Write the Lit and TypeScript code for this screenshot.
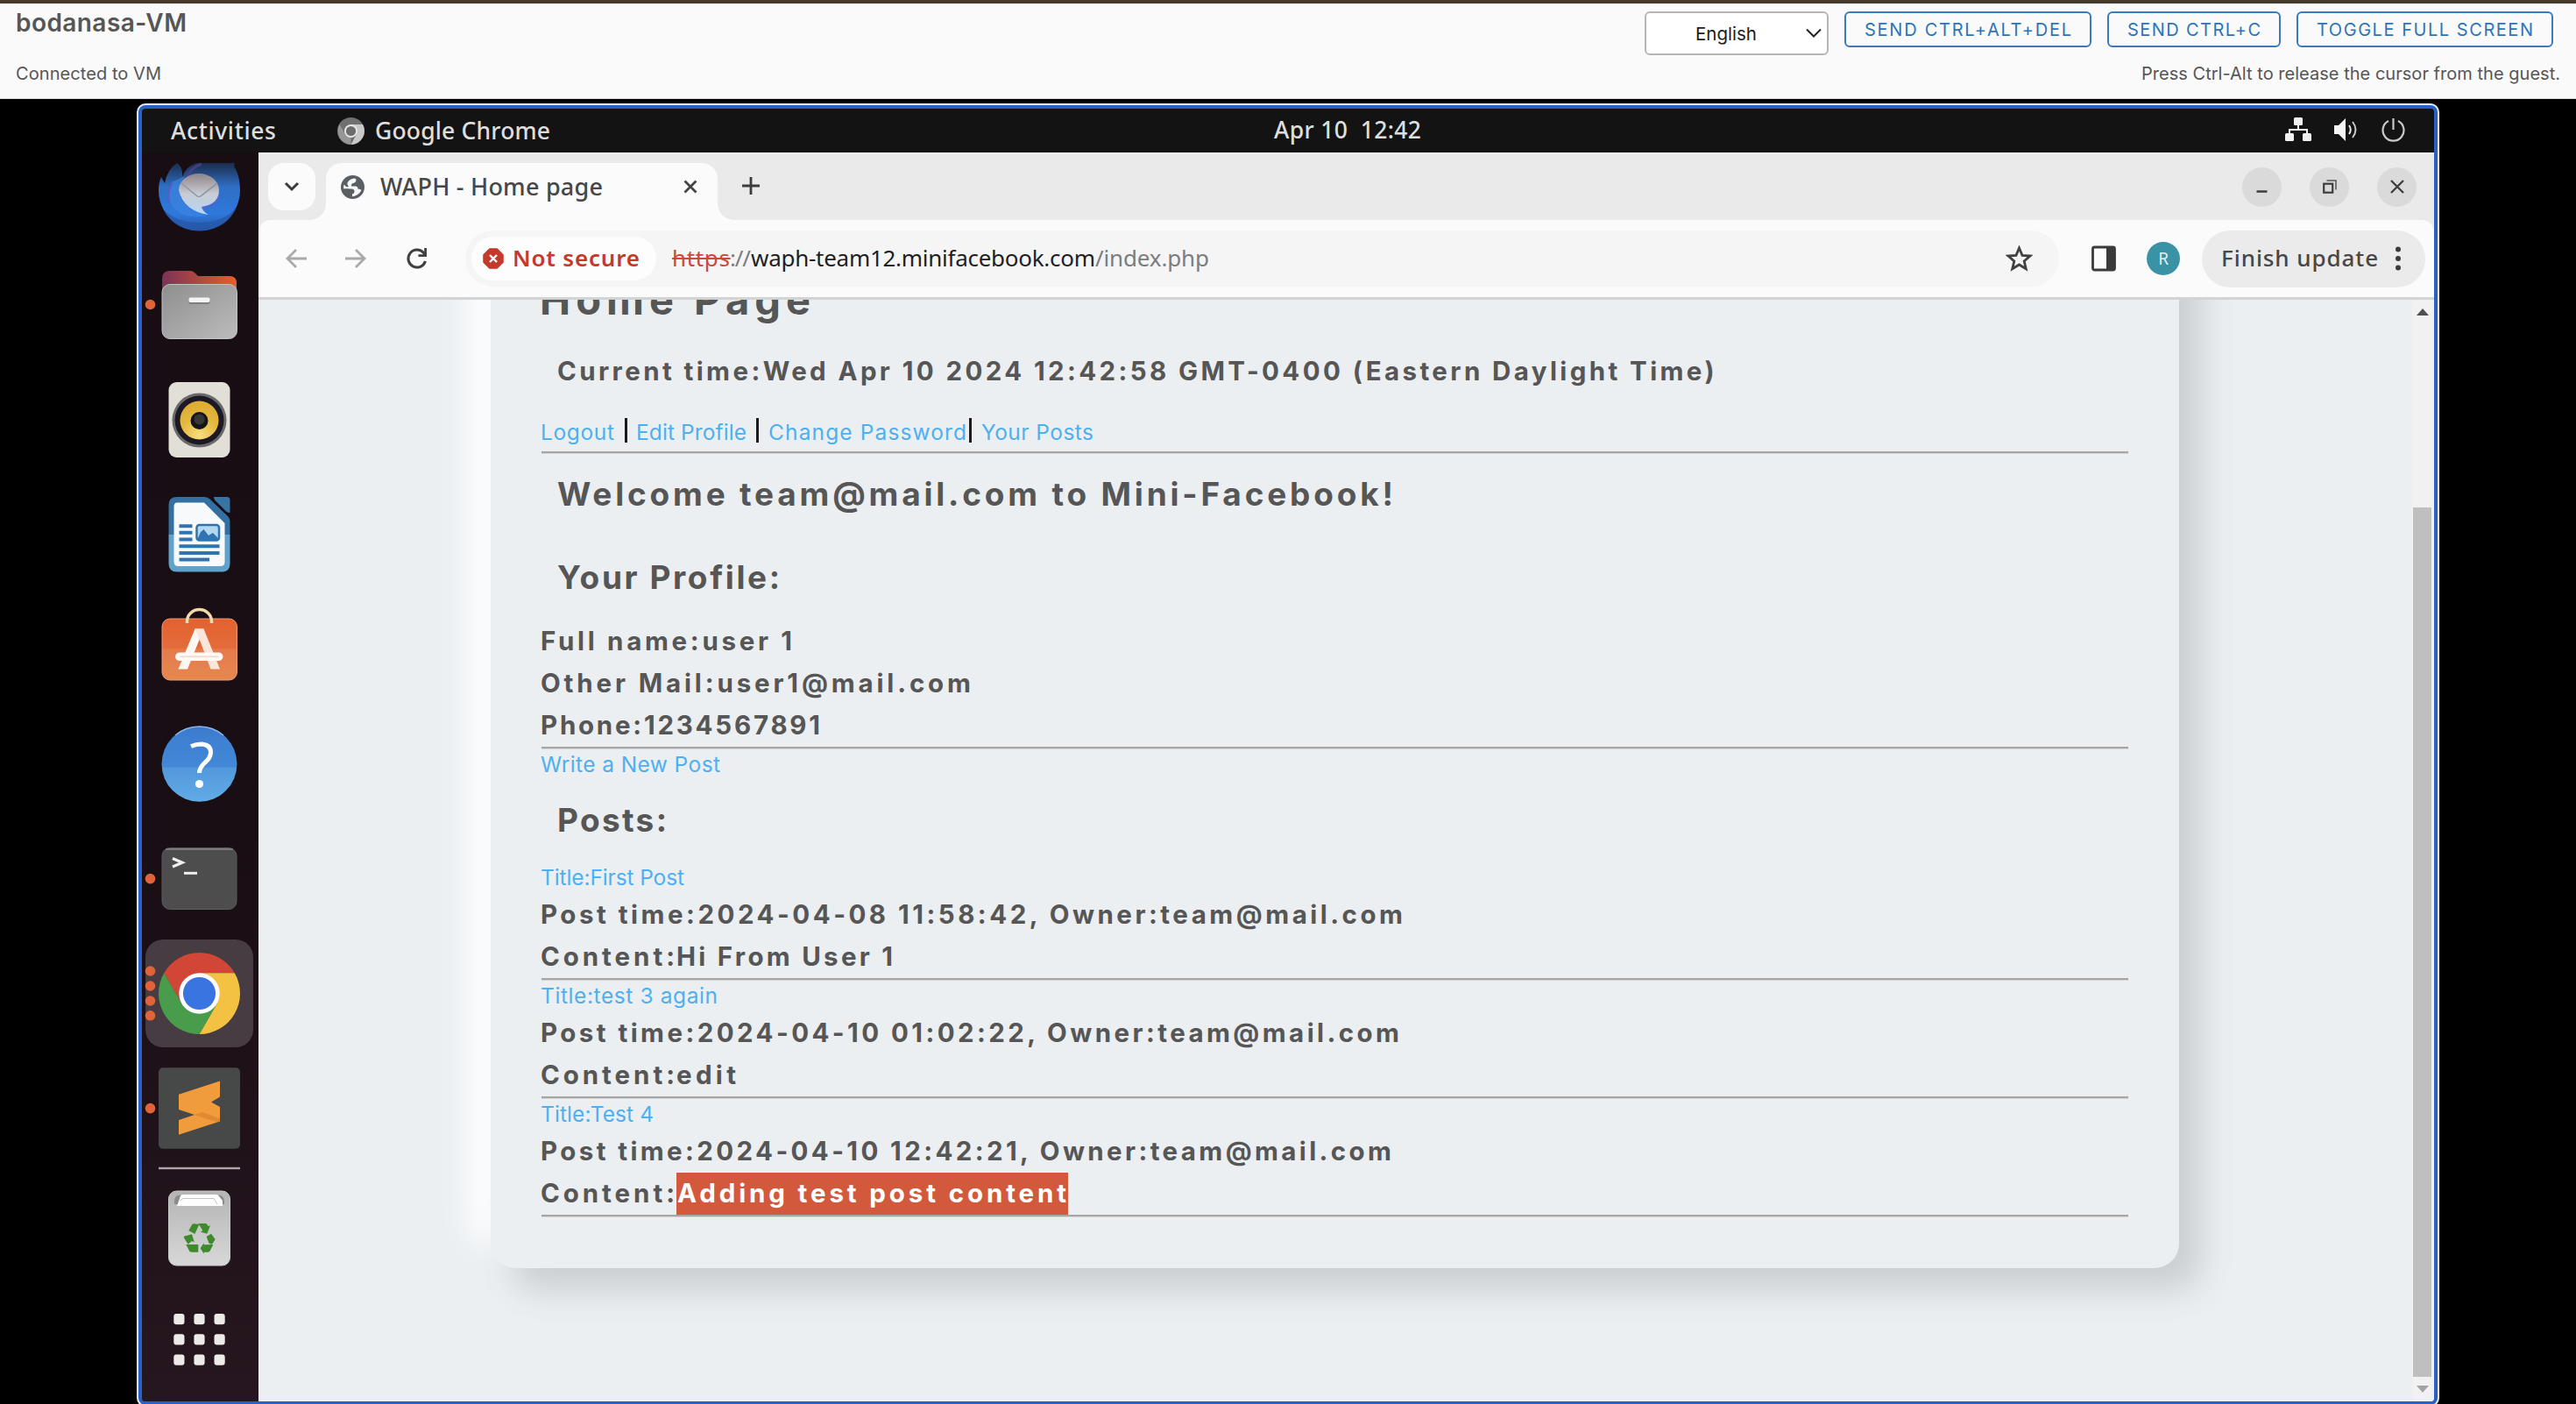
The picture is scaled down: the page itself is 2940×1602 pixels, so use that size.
import { LitElement, html, svg, css } from "lit";
import { customElement, property, query } from "lit/decorators.js";

/** One line of text whose tracking is adjusted so that it spans a given width. */
@customElement("tracked-text")
class TrackedText extends LitElement {
  static styles = css`
    :host { display: block; flex: none; white-space: pre; }
    .t { display: inline-block; text-decoration: inherit; }
  `;
  @property() text = "";
  @property({ type: Number }) span = 100;
  @query(".t") line!: HTMLElement;

  render() {
    return html`<span class="t">${this.text}</span>`;
  }
  updated() {
    this.style.width = `${this.span}px`;
    this.line.style.letterSpacing = "normal";
    const natural = this.line.getBoundingClientRect().width;
    const gaps = Math.max(1, this.text.length - 1);
    this.line.style.letterSpacing = `${(this.span - natural) / gaps}px`;
  }
}

const tt = (text: string, span: number, cls = "") =>
  html`<tracked-text class=${cls} .text=${text} .span=${span}></tracked-text>`;

const dot = (y: number) => svg`<circle cx="171.5" cy=${y} r="5.8" fill="#e0643a"/>`;

const dockItems = [
  {
    top: 174, h: 108,
    art: svg`
      <defs>
        <linearGradient id="tb" x1="0" y1="0" x2="0" y2="1"><stop offset="0" stop-color="#1b2c4c"/><stop offset=".35" stop-color="#2f6fc4"/><stop offset=".75" stop-color="#2f78dc"/><stop offset="1" stop-color="#2858a8"/></linearGradient>
        <linearGradient id="te" x1="0" y1="0" x2="0" y2="1"><stop offset="0" stop-color="#8e8488"/><stop offset=".5" stop-color="#c9ccd4"/><stop offset="1" stop-color="#b5d6f5"/></linearGradient>
      </defs>
      <path d="M184 202 L188 209 Q191 193 202 186 Q209 190 208 202 Q212 190 224 186 H268 Q266 190 269 193 Q274 203 274 217 A46.5 46.5 0 0 1 181 217 Q181 208 184 202Z" fill="url(#tb)"/>
      <path d="M186 238 Q200 254 227 254 Q258 254 271 234 Q260 263 227 263 Q198 263 186 238Z" fill="#2457a6" opacity=".7"/>
      <path d="M196 208 Q188 226 199 238 Q212 251 237 246 Q216 240 207 224 Q203 212 211 201" fill="#3a84e0" opacity=".7"/>
      <path d="M197 209 Q190 217 193 231" fill="none" stroke="#6a50c0" stroke-width="2.5" opacity=".7"/>
      <path d="M213 203 Q218 191 230 187" fill="none" stroke="#54418d" stroke-width="3" opacity=".7"/>
      <path d="M230 237 Q244 236 250 224" fill="none" stroke="#5f5fd0" stroke-width="3" opacity=".6"/>
      <path d="M204 217 A23 19 0 0 1 250 217 Q250 233 230 236 Q231 241 238 245 Q210 241 204 217Z" fill="url(#te)"/>
      <path d="M207 209 L224 223 Q227 226 230 223 L248 209" fill="none" stroke="#8a97ab" stroke-width="1.6"/>`,
  },
  {
    top: 282, h: 131,
    art: svg`
      <defs>
        <linearGradient id="fo"><stop offset="0" stop-color="#7b3358"/><stop offset=".5" stop-color="#b0493f"/><stop offset="1" stop-color="#e3602c"/></linearGradient>
        <linearGradient id="fg" x1="0" y1="0" x2="1" y2="1"><stop offset="0" stop-color="#8e8e8e"/><stop offset="1" stop-color="#bcbcbc"/></linearGradient>
      </defs>
      ${dot(347.5)}
      <path d="M185 345 V318 Q185 309 194 309 H217 Q220 309 222 311 L226 315 H262 Q270 315 270 323 V345Z" fill="url(#fo)"/>
      <rect x="185" y="324.500" width="85.500" height="62" rx="9" fill="url(#fg)" stroke="#c2c2c2" stroke-width="1"/>
      <rect x="215.500" y="341" width="24" height="6" rx="2" fill="#808080"/>
      <rect x="215.500" y="339.500" width="24" height="5.500" rx="2" fill="#f4f4f4"/>`,
  },
  {
    top: 413, h: 131,
    art: svg`
      <defs>
        <radialGradient id="ry" cx=".5" cy=".9" r=".8"><stop offset="0" stop-color="#f7df80"/><stop offset=".6" stop-color="#e5b93f"/><stop offset="1" stop-color="#dfae35"/></radialGradient>
      </defs>
      <rect x="192.500" y="436" width="70" height="86" rx="9" fill="#e2dfd6"/>
      <circle cx="227.500" cy="479.500" r="31" fill="#6a6a6c"/>
      <circle cx="227.500" cy="479.500" r="28" fill="#1c1924"/>
      <circle cx="227.500" cy="479.500" r="22" fill="url(#ry)"/>
      <circle cx="227.500" cy="480" r="10" fill="#151515"/>
      <circle cx="227.500" cy="478.500" r="6" fill="#373737"/>`,
  },
  {
    top: 544, h: 131,
    art: svg`
      <path d="M202 567 H233 Q236 567 239 569 L260 589 Q262.500 592 262.500 595 V610 H192.500 V576 Q192.500 567 202 567Z" fill="#336fa0"/>
      <path d="M192.500 610 H262.500 V643 Q262.500 652.500 253 652.500 H202 Q192.500 652.500 192.500 643Z" fill="#5fa3cd"/>
      <path d="M240 564 L266 589" stroke="#170d13" stroke-width="4"/>
      <path d="M202 573.500 H233 L256.500 597 V641 Q256.500 646 251.500 646 H203.500 Q198.500 646 198.500 641 V578 Q198.500 573.500 202 573.500Z" fill="#f8f9fb"/>
      <path d="M244 567 H259 Q262.500 567 262.500 571 V585 Q260 585 258 583.500 L245.500 571 Q244 569 244 567Z" fill="#3773a3"/>
      <path d="M204.500 600.200H219.500M204.500 607.800H219.500M204.500 615.500H219.500M204.500 623.200H250.500M204.500 630.900H250.500M204.500 638.600H239" stroke="#2f73b3" stroke-width="4"/>
      <rect x="224.500" y="599" width="25.500" height="17.500" rx="3" fill="#b3d8f2" stroke="#2f73b3" stroke-width="2.500"/>
      <path d="M225.500 615 L229 607 L232.500 604 L238 611 L243 608 L249 614 V616H226Z" fill="#2f73b3"/>`,
  },
  {
    top: 675, h: 131,
    art: svg`
      <defs><linearGradient id="so" x1="0" y1="0" x2="0" y2="1"><stop offset="0" stop-color="#e2622f"/><stop offset=".48" stop-color="#e46c3b"/><stop offset=".5" stop-color="#e67a4b"/><stop offset="1" stop-color="#e5884f"/></linearGradient></defs>
      <rect x="185" y="706" width="85.500" height="70" rx="9" fill="url(#so)" stroke="#ee9a72" stroke-width="1"/>
      <path d="M213.500 711 V709 A14 13.500 0 0 1 241.500 709 V711" fill="none" stroke="#f3d9a8" stroke-width="3.500"/>
      <path d="M222.500 717.500 H232.500 L214 763.500 H203.500Z" fill="#fff8f2"/>
      <path d="M222.500 717.500 H232.500 L251 763.500 H240.500 L225.500 724Z" fill="#fae6da"/>
      <rect x="200" y="744.500" width="54.500" height="9.500" rx="4.700" fill="#fffaf6"/>
      <path d="M205 749.200H249.500" stroke="#f5cdbb" stroke-width="1.300"/>`,
  },
  {
    top: 806, h: 131,
    art: svg`
      <defs><linearGradient id="he" x1="0" y1="0" x2="0" y2="1"><stop offset="0" stop-color="#3c7bcf"/><stop offset=".54" stop-color="#4389d8"/><stop offset=".55" stop-color="#5198dc"/><stop offset="1" stop-color="#62ace6"/></linearGradient></defs>
      <circle cx="227.500" cy="871.700" r="43" fill="url(#he)"/>
      <path d="M200 839 A43 43 0 0 1 255 839" fill="none" stroke="#8db9ea" stroke-width="1.400"/>
      <path d="M218 851.500 Q224 849 230 849 Q241 850 240.500 859 Q240 865 234 870 Q227.500 876 227.500 882" fill="none" stroke="#fff" stroke-width="5"/>
      <circle cx="227.500" cy="894.500" r="4.600" fill="#fff"/>`,
  },
  {
    top: 937, h: 131,
    art: svg`
      ${dot(1002.6)}
      <rect x="185" y="967.500" width="85" height="70" rx="9" fill="#4d4d4d" stroke="#5d5d5d" stroke-width="1"/>
      <path d="M190 969 H265" stroke="#7a7a7a" stroke-width="2" stroke-linecap="round"/>
      <path d="M197 979.500 L208 984.300 L197 989" fill="none" stroke="#f0f0f0" stroke-width="3.200"/>
      <path d="M210 996.300 H225" stroke="#f0f0f0" stroke-width="3"/>`,
  },
  {
    top: 1068, h: 131,
    art: svg`
      <rect x="166" y="1072" width="123" height="123" rx="20" fill="#463c42"/>
      ${dot(1108)}${dot(1125)}${dot(1142)}${dot(1158.800)}
      <g transform="translate(227.500 1133.500)">
        <path d="M-40.300 -23.200 A46.500 46.500 0 0 1 40.300 -23.200 H0 V0 L-20.200 11.600Z" fill="#d24638"/>
        <path d="M40.300 -23.200 A46.500 46.500 0 0 1 0 46.500 L20.200 11.600 L0 -23.200Z" fill="#f3c243"/>
        <path d="M-40.300 -23.200 A46.500 46.500 0 0 0 0 46.500 L20.200 11.600 L0 20 L-20.200 11.600Z" fill="#489c4c"/>
        <circle r="23.200" fill="#fff"/>
        <circle r="18.600" fill="#3974e0"/>
      </g>`,
  },
  {
    top: 1199, h: 131,
    art: svg`
      ${dot(1264.6)}
      <rect x="181" y="1218.300" width="93" height="92.500" rx="5" fill="#474848"/>
      <path d="M204 1248.700 L251 1233.500 V1251.500 L241 1257.500 L251 1263 V1279.500 L204 1294.800 V1278 L222 1272 L204 1266Z" fill="#f09c3c"/>
      <path d="M222 1272 L231 1269 L251 1276.500 V1279.500 L248 1280.500Z" fill="#d9822c" opacity=".7"/>`,
  },
  { top: 1330, h: 6, art: svg`<rect x="181" y="1331.800" width="93" height="2.400" fill="#aea6ac"/>` },
  {
    top: 1336, h: 131,
    art: svg`
      <defs><linearGradient id="tr" x1="0" y1="0" x2="0" y2="1"><stop offset="0" stop-color="#b4b4b4"/><stop offset="1" stop-color="#d8d8d8"/></linearGradient></defs>
      <rect x="192.500" y="1359" width="70" height="85" rx="9" fill="url(#tr)" stroke="#c9c9c9" stroke-width="1"/>
      <path d="M199 1374 Q198 1363.500 206 1363.500 H249 Q257 1363.500 256 1374Z" fill="#8b8b8b"/>
      <path d="M202 1376 L206 1364.500 Q206.500 1363 208 1363 H247 Q249 1363 250 1365 L254 1370 V1376Z" fill="#fdfdfd"/>
      <path d="M205 1370 L209 1367.500 H244 L248 1374" fill="none" stroke="#c5c5c5" stroke-width="1"/>
      <g fill="#3f8a2d" transform="translate(160 1340) scale(.33333)">
        <path d="M166 192 L178 171 Q180 169 184 169 L202 171 L187 204Z"/>
        <path d="M199 168 H224 Q227 168 229 171 L233 178 L240 175 L229 203 L207 197 L214 192Z"/>
        <path d="M149 212 L177 205 L185 231 L176 229 L164 239 L151 219Z"/>
        <path d="M157 240 H199 V266 H175 Q170 266 168 262Z"/>
        <path d="M250 240 L239 262 Q237 266 233 266 H218 V272 L206 253 L218 235 V241Z"/>
        <path d="M227 213 L243 203 L255 220 Q257 223 255 226 L247 238 Q240 240 235 235Z"/>
      </g>`,
  },
  {
    top: 1467, h: 119,
    art: svg`${[1499, 1522.3, 1545.5].map((y) =>
      [198.3, 221.4, 244.5].map((x) => svg`<rect x=${x} y=${y} width="12.200" height="12.200" rx="3" fill="#ecebe9"/>`))}`,
  },
];

const posts = [
  { title: "Title:First Post", tw: 164, meta: "Post time:2024-04-08 11:58:42, Owner:team@mail.com", mw: 984, body: "Hi From User 1", bw: 247, marked: false },
  { title: "Title:test 3 again", tw: 202, meta: "Post time:2024-04-10 01:02:22, Owner:team@mail.com", mw: 980, body: "edit", bw: 68, marked: false },
  { title: "Title:Test 4", tw: 129, meta: "Post time:2024-04-10 12:42:21, Owner:team@mail.com", mw: 971, body: "Adding test post content", bw: 444, marked: true },
];

@customElement("app-root")
class AppRoot extends LitElement {
  static styles = css`
    :host { display: block; width: 2940px; height: 1602px; overflow: hidden; background: #000; font-family: Inter, "Liberation Sans", sans-serif; }
    * { box-sizing: border-box; }
    svg { display: block; flex: none; }
    .row { display: flex; align-items: center; }

    .console { height: 113px; border-top: 4px solid #463a2c; border-bottom: 1px solid #d8d8d8; background: #fafafa; color: #565656; padding: 0 18px; }
    .ctop { display: flex; justify-content: space-between; height: 63px; }
    .vmname { font-size: 28px; font-weight: 600; line-height: 44px; }
    .actions { display: flex; gap: 18px; padding: 9px 8px 0 0; align-items: flex-start; }
    .select { width: 210px; height: 50px; border: 2px solid #b6b6b6; border-radius: 6px; background: #fff; display: flex; align-items: center; padding: 0 5px 0 56px; justify-content: space-between; font-size: 20.5px; color: #1c1c1c; }
    .btn { height: 41px; border: 2px solid #3a7bbb; border-radius: 6px; color: #2c75b8; font-size: 20px; font-weight: 400; line-height: 38px; padding: 0 21px; }
    .cbot { display: flex; justify-content: space-between; font-size: 20px; line-height: 34px; }

    .stage { padding: 5px 0 0 156px; }
    .frame { width: 2628px; height: 1487px; border: 2px solid #e9edf6; border-radius: 10px; background: #2860c8; padding: 4px; overflow: hidden; }
    .desk { height: 1475px; background: #131313; border-radius: 4px; overflow: hidden; display: flex; flex-direction: column; }
    .topbar { height: 50px; flex: none; display: flex; align-items: center; padding: 0 33px; font-family: "Noto Sans", "Open Sans", sans-serif; font-size: 26.500px; font-weight: 500; color: #dedede; }
    .mono { margin: 0 12px 0 70px; }
    .clock { margin-left: 826px; padding-bottom: 2px; }
    .tray { margin-left: auto; gap: 26px; padding-bottom: 3px; }
    .work { display: flex; flex: 1; }
    .dock { width: 133px; background: linear-gradient(#170d13, #190e14 55%, #26161f); }

    .chrome { width: 2483px; height: 1425px; background: #ebeff2; display: flex; flex-direction: column; color: #474747; font-family: "Noto Sans", "Open Sans", sans-serif; font-size: 26px; }
    .strip { height: 77px; flex: none; background: #eaeaea; border-top: 2px solid #fff; display: flex; padding: 10px 20px 0 11px; }
    .drop { width: 54px; height: 54px; border-radius: 18px; background: #fbfbfb; display: grid; place-items: center; margin-right: 12px; }
    .tab { position: relative; width: 447px; height: 65px; border-radius: 18px 18px 0 0; background: #fbfbfb; display: flex; align-items: center; padding: 0 23px 11px 17px; font-size: 27px; font-weight: 500; }
    .tab::before, .tab::after { content: ""; position: absolute; bottom: 0; width: 18px; height: 18px; }
    .tab::before { left: -18px; background: radial-gradient(circle at 0 0, transparent 17.500px, #fbfbfb 18px); }
    .tab::after { right: -18px; background: radial-gradient(circle at 100% 0, transparent 17.500px, #fbfbfb 18px); }
    .tabtitle { margin: -2px 0 0 18px; }
    .tabclose { margin-left: auto; }
    .plus { margin: 16px 0 0 28px; }
    .wins { display: flex; gap: 32px; margin-left: auto; padding-top: 4.500px; }
    .win { width: 45px; height: 45px; border-radius: 50%; background: #dadada; display: grid; place-items: center; }
    .toolwrap { height: 91px; flex: none; background: #eaeaea; }
    .tools { height: 91px; background: #fbfbfb; border-radius: 14px 14px 0 0; border-bottom: 3px solid #d2d3d4; display: flex; align-items: center; padding: 0 10px 0 30px; }
    .fwd { margin-left: 42px; }
    .reload { margin-left: 44px; }
    .omni { margin-left: 42px; width: 1820px; height: 64px; border-radius: 32px; background: #f5f5f5; display: flex; align-items: center; padding: 0 30px 0 7px; }
    .chip { width: 211px; height: 50px; border-radius: 25px; background: #fdfdfd; display: flex; align-items: center; padding-left: 13px; margin-right: 18px; color: #c5392b; font-weight: 600; }
    .chiptext { margin-left: 10px; }
    .lift { margin-top: -2px; }
    .scheme { color: #cb4a3c; text-decoration: line-through; text-decoration-thickness: 2px; }
    .dim { color: #7d7d7d; }
    .host { color: #1f1f1f; }
    .star { margin-left: auto; }
    .panel { margin-left: 37px; }
    .avatar { width: 38px; height: 38px; border-radius: 50%; background: #3a93a5; color: #dff0f3; display: grid; place-items: center; font-size: 19px; line-height: 38px; margin-left: 35px; margin-right: 25px; }
    .update { width: 255px; height: 65px; border-radius: 33px; background: #ebebeb; display: flex; align-items: center; padding: 0 27px 0 22px; justify-content: space-between; font-weight: 500; }

    .view { flex: 1; min-height: 0; display: flex; overflow: hidden; }
    .page { flex: 1; overflow: hidden; padding-left: 265px; }
    .card { width: 1927px; margin-top: -230px; padding: 200px 58px 58px; border-radius: 28px; background: #ebeff2; box-shadow: 25px 25px 38px #cbced1, -25px -25px 38px #fff; font-family: Inter, "Liberation Sans", sans-serif; color: #565656; font-weight: 700; font-size: 29.500px; display: flex; flex-direction: column; }
    .home { font-size: 47px; line-height: 60px; margin-left: -2px; }
    .time { line-height: 48px; margin: 27px 0 0 18px; }
    .h2 { font-size: 37px; line-height: 56px; margin-left: 18px; }
    .welcome { margin-top: 18px; }
    .profile { margin-top: 39px; margin-bottom: 21px; }
    .ph { margin-top: 17px; margin-bottom: 20px; }
    .line { height: 48px; line-height: 47px; display: flex; }
    .nudge { margin-left: -1px; }
    .nav { display: flex; height: 40px; margin-top: 26px; margin-bottom: 2px; align-items: center; }
    .link { color: #4eb0f0; font-size: 24.500px; font-weight: 400; line-height: 35px; margin-left: -1px; }
    .title { height: 36px; }
    .bar { width: 3px; height: 28px; background: #1e1a1c; }
    .b1 { margin: -5px 11px 0 12px; } .b2 { margin: -5px 12px 0 11px; } .b3 { margin: -5px 12px 0 3px; }
    .hr { height: 3px; background: linear-gradient(#a5a6a8 0 2px, #d2d4d6 2px 3px); }
    .mark { background: #d2593c; color: #fff; padding: 0 1px; width: 447px; height: 49px; }
    .label { width: 154px; }
    .scroll { width: 25px; background: #f1f1f1; display: flex; flex-direction: column; align-items: center; padding: 10px 4px 9px 2px; }
    .thumb { width: 21px; height: 992px; background: #bfbfbf; margin: 219px 0 10px; flex: none; }
  `;

  private dock() {
    return html`<div class="dock">${dockItems.map((d) => html`
      <svg width="133" height=${d.h} viewBox="162 ${d.top} 133 ${d.h}">${d.art}</svg>`)}</div>`;
  }

  private topbar() {
    return html`<div class="topbar">
      ${tt("Activities", 120)}
      <svg class="mono" width="31" height="31" viewBox="0 0 31 31">
        <circle cx="15.500" cy="15.500" r="15.500" fill="#707070"/>
        <path d="M15.500 8 H29 A15.500 15.500 0 0 1 15.500 31 L22 19Z" fill="#c9c9c9"/>
        <path d="M2.500 8 L9 19 L15.500 23 V31 A15.500 15.500 0 0 1 2.500 8Z" fill="#969696"/>
        <circle cx="15.500" cy="15.500" r="7.500" fill="#e8e8e8"/><circle cx="15.500" cy="15.500" r="5.600" fill="#6c6c6c"/>
      </svg>
      ${tt("Google Chrome", 200)}
      ${tt("Apr 10  12:42", 168, "clock")}
      <div class="row tray">
        <svg width="30" height="27" viewBox="0 0 30 27"><g fill="#f0f0f0"><rect x="10" y="0" width="10" height="9" rx="1.500"/><rect x="0" y="18" width="10" height="9" rx="1.500"/><rect x="20" y="18" width="10" height="9" rx="1.500"/></g><path d="M15 8V14M5 19V14H25V19" stroke="#f0f0f0" stroke-width="2" fill="none"/></svg>
        <svg width="28" height="28" viewBox="0 0 28 28"><path d="M0 9 H5 L13 1 V27 L5 19 H0Z" fill="#f4f4f4"/><path d="M17 9 Q20.500 14 17 19" fill="none" stroke="#e8e8e8" stroke-width="2"/><path d="M21 5 Q28 14 21 23" fill="none" stroke="#c8c8c8" stroke-width="2"/></svg>
        <svg width="27" height="28" viewBox="0 0 27 28"><path d="M8 4 A12 12 0 1 0 19 4" fill="none" stroke="#c9c9c9" stroke-width="2.200"/><path d="M13.500 1V14" stroke="#c9c9c9" stroke-width="2.200"/></svg>
      </div>
    </div>`;
  }

  private tabs() {
    return html`<div class="strip">
      <div class="drop"><svg width="18" height="12" viewBox="0 0 18 12"><path d="M2 2 L9 9 L16 2" fill="none" stroke="#3c3c3c" stroke-width="3"/></svg></div>
      <div class="tab">
        <svg width="27" height="27" viewBox="0 0 27 27"><circle cx="13.500" cy="13.500" r="13.500" fill="#5b5f64"/><path d="M7.500 8.500 Q10 4 15.500 3.500 L17.500 4.500 Q17.500 8.500 14 9 Q11.500 9.500 12 12.500 H17.500 Q19.500 13 19.500 15.500 Q22.500 15.500 23.500 17 Q20 24 12 24.300 V21.500 Q15.500 21.500 15.500 18.500 Q15.500 15.500 12 15.500 H3.200 Q2.800 12.500 3.700 10.500 Q6 14 9 13 Q7 11 7.500 8.500Z" fill="#f6f7f8"/><path d="M3.200 15.500 H9 Q10 20 13 21 V24.200 Q5 23.500 3.200 15.500Z" fill="#5b5f64"/></svg>
        ${tt("WAPH - Home page", 254, "tabtitle")}
        <svg class="tabclose" width="16" height="16" viewBox="0 0 16 16"><path d="M1.500 1.500L14.500 14.500M14.500 1.500L1.500 14.500" stroke="#444" stroke-width="2.800"/></svg>
      </div>
      <svg class="plus" width="20" height="20" viewBox="0 0 20 20"><path d="M10 0V20M0 10H20" stroke="#3c3c3c" stroke-width="2.800"/></svg>
      <div class="wins">
        <div class="win"><svg width="17" height="17" viewBox="0 0 17 17"><path d="M2.500 13.500H14.500" stroke="#3d3d3d" stroke-width="2.400"/></svg></div>
        <div class="win"><svg width="16" height="16" viewBox="0 0 16 16"><path d="M4.500 1H15V11.500" fill="none" stroke="#555" stroke-width="1.500"/><rect x="1.200" y="4.700" width="10" height="10" fill="none" stroke="#3d3d3d" stroke-width="2.200"/></svg></div>
        <div class="win"><svg width="16" height="16" viewBox="0 0 16 16"><path d="M1 1L15 15M15 1L1 15" stroke="#3d3d3d" stroke-width="2.300"/></svg></div>
      </div>
    </div>`;
  }

  private tools() {
    return html`<div class="toolwrap"><div class="tools">
      <svg width="26" height="24" viewBox="0 0 26 24"><path d="M25 12H3M13 2L3 12L13 22" fill="none" stroke="#a9a9a9" stroke-width="2.800"/></svg>
      <svg class="fwd" width="26" height="24" viewBox="0 0 26 24"><path d="M1 12H23M13 2L23 12L13 22" fill="none" stroke="#a9a9a9" stroke-width="2.800"/></svg>
      <svg class="reload" width="26" height="26" viewBox="0 0 26 26"><path d="M22.500 16 A10 10 0 1 1 20.500 6.500 L23 9.500" fill="none" stroke="#3f3f3f" stroke-width="3"/><path d="M24 1V11H14.500V8.200H21.200V1Z" fill="#3f3f3f"/></svg>
      <div class="omni">
        <div class="chip">
          <svg width="24" height="24" viewBox="0 0 24 24"><path d="M7.500 .8H16.500L23.200 7.500V16.500L16.500 23.200H7.500L.8 16.500V7.500Z" fill="#c5392b" stroke="#c5392b" stroke-linejoin="round"/><path d="M8 8L16 16M16 8L8 16" stroke="#fff" stroke-width="2.400"/></svg>
          ${tt("Not secure", 145, "chiptext lift")}
        </div>
        ${tt("https", 66, "scheme lift")}${tt("://", 24, "dim lift")}${tt("waph-team12.minifacebook.com", 393, "host lift")}${tt("/index.php", 130, "dim lift")}
        <svg class="star" width="31" height="30" viewBox="0 0 31 30"><path d="M15.500 3L19 11.300L28 12L21.200 18L23.300 26.700L15.500 22L7.700 26.700L9.800 18L3 12L12 11.300Z" fill="none" stroke="#414141" stroke-width="2.800"/></svg>
      </div>
      <svg class="panel" width="28" height="30" viewBox="0 0 28 30"><rect x="1.500" y="2" width="25" height="26" rx="2" fill="none" stroke="#3a3a3a" stroke-width="2.800"/><path d="M17 2H27V28H17Z" fill="#3a3a3a"/></svg>
      <div class="avatar">R</div>
      <div class="update">${tt("Finish update", 179, "lift")}
        <svg width="8" height="28" viewBox="0 0 8 28"><g fill="#3c3c3c"><circle cx="4" cy="3.500" r="3"/><circle cx="4" cy="14" r="3"/><circle cx="4" cy="24.500" r="3"/></g></svg>
      </div>
    </div></div>`;
  }

  private page() {
    return html`<div class="view">
      <div class="page"><div class="card">
        ${tt("Home Page", 309, "home")}
        ${tt("Current time:Wed Apr 10 2024 12:42:58 GMT-0400 (Eastern Daylight Time)", 1320, "time")}
        <div class="nav">
          ${tt("Logout", 84, "link")}<div class="bar b1"></div>
          ${tt("Edit Profile", 126, "link")}<div class="bar b2"></div>
          ${tt("Change Password", 226, "link")}<div class="bar b3"></div>
          ${tt("Your Posts", 128, "link")}
        </div>
        <div class="hr"></div>
        ${tt("Welcome team@mail.com to Mini-Facebook!", 954, "h2 welcome")}
        ${tt("Your Profile:", 254, "h2 profile")}
        <div class="line">${tt("Full name:user 1", 287, "nudge")}</div>
        <div class="line">${tt("Other Mail:user1@mail.com", 491, "nudge")}</div>
        <div class="line">${tt("Phone:1234567891", 319, "nudge")}</div>
        <div class="hr"></div>
        ${tt("Write a New Post", 205, "link title")}
        ${tt("Posts:", 125, "h2 ph")}
        ${posts.map((p) => html`
          ${tt(p.title, p.tw, "link title")}
          <div class="line">${tt(p.meta, p.mw, "nudge")}</div>
          <div class="line"><div class="label">${tt("Content:", 153, "nudge")}</div>${p.marked
            ? html`<div class="mark">${tt(p.body, p.bw)}</div>`
            : tt(p.body, p.bw)}</div>
          <div class="hr"></div>`)}
      </div></div>
      <div class="scroll">
        <svg width="14" height="8" viewBox="0 0 14 8"><path d="M0 8L7 0L14 8Z" fill="#505050"/></svg>
        <div class="thumb"></div>
        <svg width="14" height="8" viewBox="0 0 14 8"><path d="M0 0L7 8L14 0Z" fill="#a3a3a3"/></svg>
      </div>
    </div>`;
  }

  render() {
    return html`
      <div class="console">
        <div class="ctop">
          <div class="vmname">${tt("bodanasa-VM", 195, "vmlabel")}</div>
          <div class="actions">
            <div class="select">${tt("English", 70)}<svg width="20" height="12" viewBox="0 0 20 12"><path d="M2 1.500L10 9.500L18 1.500" fill="none" stroke="#222" stroke-width="2"/></svg></div>
            <div class="btn">${tt("SEND CTRL+ALT+DEL", 236)}</div>
            <div class="btn">${tt("SEND CTRL+C", 152)}</div>
            <div class="btn">${tt("TOGGLE FULL SCREEN", 247)}</div>
          </div>
        </div>
        <div class="cbot">${tt("Connected to VM", 166)}${tt("Press Ctrl-Alt to release the cursor from the guest.", 478)}</div>
      </div>
      <div class="stage"><div class="frame"><div class="desk">
        ${this.topbar()}
        <div class="work">
          ${this.dock()}
          <div class="chrome">${this.tabs()}${this.tools()}${this.page()}</div>
        </div>
      </div></div></div>`;
  }
}
